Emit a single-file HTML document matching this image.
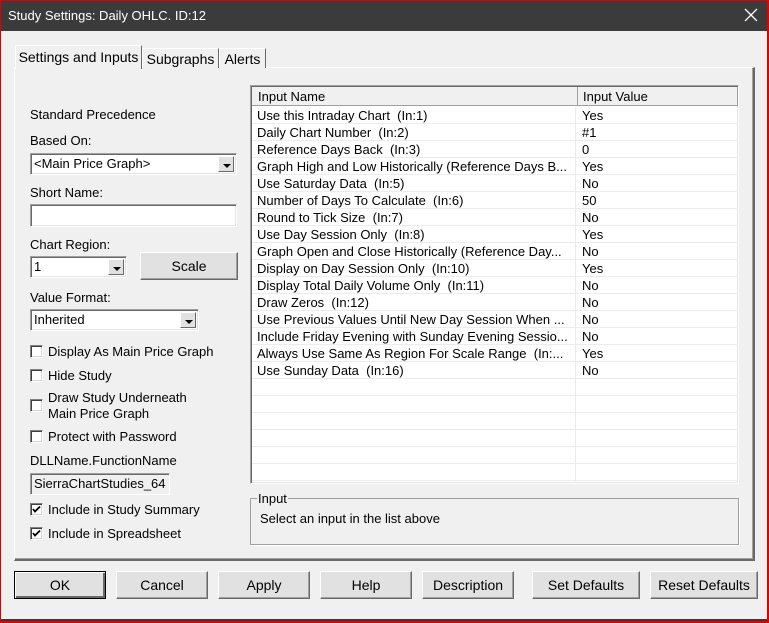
<!DOCTYPE html>
<html><head><meta charset="utf-8"><style>
*{box-sizing:border-box;margin:0;padding:0}
body{width:769px;height:623px;overflow:hidden;background:#f0f0f0;font-family:"Liberation Sans",sans-serif;font-size:13px;color:#000;position:relative}
.a{position:absolute;white-space:nowrap}
.title{left:0;top:0;width:769px;height:31px;background:#3b3b3b;color:#fff;font-size:13px;line-height:31px;padding-left:8px}
.frame{left:0;top:0;width:769px;height:623px;border:1px solid #e00000;border-right-width:2px;border-bottom-width:2px;pointer-events:none}
.sunk{background:#fff;border:1px solid #a0a0a0;border-right-color:#fff;border-bottom-color:#fff;box-shadow:inset 1px 1px 0 #696969,inset -1px -1px 0 #e3e3e3}
.btn{background:#e1e1e1;border:1px solid #fff;border-right-color:#696969;border-bottom-color:#696969;box-shadow:inset -1px -1px 0 #a0a0a0;text-align:center}
.arrow{position:absolute;right:2px;top:2px;bottom:2px;width:16px;background:#e1e1e1;border:1px solid #fff;border-right-color:#696969;border-bottom-color:#696969}
.arrow:after{content:"";position:absolute;left:4px;top:7px;border-left:4px solid transparent;border-right:4px solid transparent;border-top:4px solid #000}
.cb{width:13px;height:13px;background:#fff;border:1px solid #808080;border-right-color:#fff;border-bottom-color:#fff;box-shadow:inset 1px 1px 0 #404040,inset -1px -1px 0 #d4d4d4}
.tab{border:1px solid #fff;border-right-color:#696969;border-bottom:none;background:#f0f0f0;text-align:center}
.row{position:absolute;left:1px;width:486px;height:17px;border-bottom:1px solid #ececec;line-height:18px}
.row span{position:absolute;left:5px}
.row b{font-weight:normal;position:absolute;left:330px}
</style></head><body>
<div class="a title">Study Settings: Daily OHLC. ID:12</div>
<svg class="a" style="left:744px;top:8px" width="14" height="14" viewBox="0 0 14 14"><path d="M1 1L13 13M13 1L1 13" stroke="#fff" stroke-width="1.3" fill="none"/></svg>

<div class="a" style="left:14px;top:67px;width:741px;height:494px;border:1px solid #fff;border-right:2px solid #696969;border-bottom:2px solid #696969;box-shadow:inset -1px -1px 0 #a0a0a0"></div>
<div class="a tab" style="left:142px;top:48px;width:77px;height:20px;line-height:20px;font-size:14px">Subgraphs</div>
<div class="a tab" style="left:219px;top:48px;width:47px;height:20px;line-height:20px;font-size:14px">Alerts</div>
<div class="a tab" style="left:15px;top:45px;width:127px;height:24px;line-height:22px;font-size:14px;border-right-color:#696969">Settings and Inputs</div>

<div class="a" style="left:30px;top:107px">Standard Precedence</div>
<div class="a" style="left:30px;top:133px">Based On:</div>
<div class="a sunk" style="left:30px;top:153px;width:207px;height:22px;line-height:19px;padding-left:3px">&lt;Main Price Graph&gt;<div class="arrow"></div></div>
<div class="a" style="left:30px;top:185px">Short Name:</div>
<div class="a sunk" style="left:30px;top:204px;width:207px;height:23px"></div>
<div class="a" style="left:30px;top:237px">Chart Region:</div>
<div class="a sunk" style="left:30px;top:256px;width:97px;height:22px;line-height:19px;padding-left:3px">1<div class="arrow"></div></div>
<div class="a btn" style="left:140px;top:252px;width:98px;height:28px;line-height:26px;font-size:14px">Scale</div>
<div class="a" style="left:30px;top:290px">Value Format:</div>
<div class="a sunk" style="left:30px;top:309px;width:169px;height:22px;line-height:19px;padding-left:3px">Inherited<div class="arrow"></div></div>

<div class="a cb" style="left:30px;top:345px"></div><div class="a" style="left:48px;top:344px">Display As Main Price Graph</div>
<div class="a cb" style="left:30px;top:369px"></div><div class="a" style="left:48px;top:368px">Hide Study</div>
<div class="a cb" style="left:30px;top:399px"></div><div class="a" style="left:48px;top:390px;line-height:16px">Draw Study Underneath<br>Main Price Graph</div>
<div class="a cb" style="left:30px;top:430px"></div><div class="a" style="left:48px;top:429px">Protect with Password</div>
<div class="a" style="left:30px;top:453px">DLLName.FunctionName</div>
<div class="a" style="left:30px;top:473px;width:140px;height:22px;border:1px solid #a0a0a0;border-right-color:#fff;border-bottom-color:#fff;box-shadow:inset 1px 1px 0 #696969;line-height:19px;padding-left:3px;background:#f0f0f0">SierraChartStudies_64</div>
<div class="a cb" style="left:30px;top:503px"><svg width="11" height="11" style="position:absolute;left:0;top:0"><path d="M2 5L4 7.5L9 2.5" stroke="#000" stroke-width="1.8" fill="none"/></svg></div><div class="a" style="left:48px;top:502px">Include in Study Summary</div>
<div class="a cb" style="left:30px;top:527px"><svg width="11" height="11" style="position:absolute;left:0;top:0"><path d="M2 5L4 7.5L9 2.5" stroke="#000" stroke-width="1.8" fill="none"/></svg></div><div class="a" style="left:48px;top:526px">Include in Spreadsheet</div>

<div class="a sunk" style="left:250px;top:85px;width:489px;height:399px;overflow:hidden">
<div class="a" style="left:1px;top:1px;width:326px;height:19px;background:#f0f0f0;border-right:1px solid #a0a0a0;border-bottom:1px solid #a0a0a0;padding-left:6px;line-height:19px">Input Name</div>
<div class="a" style="left:327px;top:1px;width:160px;height:19px;background:#f0f0f0;border-right:1px solid #a0a0a0;border-bottom:1px solid #a0a0a0;padding-left:5px;line-height:19px">Input Value</div>
<div class="a" style="left:324px;top:21px;width:1px;height:376px;background:#ececec"></div>
<div class="a" style="left:0;top:21px;width:487px">
<div class="row" style="top:0"><span>Use this Intraday Chart &nbsp;(In:1)</span><b>Yes</b></div>
<div class="row" style="top:17px"><span>Daily Chart Number &nbsp;(In:2)</span><b>#1</b></div>
<div class="row" style="top:34px"><span>Reference Days Back &nbsp;(In:3)</span><b>0</b></div>
<div class="row" style="top:51px"><span>Graph High and Low Historically (Reference Days B...</span><b>Yes</b></div>
<div class="row" style="top:68px"><span>Use Saturday Data &nbsp;(In:5)</span><b>No</b></div>
<div class="row" style="top:85px"><span>Number of Days To Calculate &nbsp;(In:6)</span><b>50</b></div>
<div class="row" style="top:102px"><span>Round to Tick Size &nbsp;(In:7)</span><b>No</b></div>
<div class="row" style="top:119px"><span>Use Day Session Only &nbsp;(In:8)</span><b>Yes</b></div>
<div class="row" style="top:136px"><span>Graph Open and Close Historically (Reference Day...</span><b>No</b></div>
<div class="row" style="top:153px"><span>Display on Day Session Only &nbsp;(In:10)</span><b>Yes</b></div>
<div class="row" style="top:170px"><span>Display Total Daily Volume Only &nbsp;(In:11)</span><b>No</b></div>
<div class="row" style="top:187px"><span>Draw Zeros &nbsp;(In:12)</span><b>No</b></div>
<div class="row" style="top:204px"><span>Use Previous Values Until New Day Session When ...</span><b>No</b></div>
<div class="row" style="top:221px"><span>Include Friday Evening with Sunday Evening Sessio...</span><b>No</b></div>
<div class="row" style="top:238px"><span>Always Use Same As Region For Scale Range &nbsp;(In:...</span><b>Yes</b></div>
<div class="row" style="top:255px"><span>Use Sunday Data &nbsp;(In:16)</span><b>No</b></div>
<div class="row" style="top:272px"></div><div class="row" style="top:289px"></div><div class="row" style="top:306px"></div><div class="row" style="top:323px"></div><div class="row" style="top:340px"></div><div class="row" style="top:357px"></div>
</div>
</div>

<div class="a" style="left:250px;top:498px;width:489px;height:47px;border:1px solid #a0a0a0;box-shadow:1px 1px 0 #fff"></div>
<div class="a" style="left:257px;top:491px;background:#f0f0f0;padding:0 1px">Input</div>
<div class="a" style="left:260px;top:511px">Select an input in the list above</div>

<div class="a btn" style="left:14px;top:571px;width:92px;height:28px;line-height:26px;font-size:14px;border:1px solid #000;box-shadow:inset 1px 1px 0 #fff,inset -2px -2px 0 #696969">OK</div>
<div class="a btn" style="left:116px;top:571px;width:92px;height:28px;line-height:26px;font-size:14px">Cancel</div>
<div class="a btn" style="left:218px;top:571px;width:92px;height:28px;line-height:26px;font-size:14px">Apply</div>
<div class="a btn" style="left:320px;top:571px;width:92px;height:28px;line-height:26px;font-size:14px">Help</div>
<div class="a btn" style="left:422px;top:571px;width:92px;height:28px;line-height:26px;font-size:14px">Description</div>
<div class="a btn" style="left:532px;top:571px;width:108px;height:28px;line-height:26px;font-size:14px">Set Defaults</div>
<div class="a btn" style="left:650px;top:571px;width:108px;height:28px;line-height:26px;font-size:14px">Reset Defaults</div>

<div class="a" style="left:1px;top:619px;width:766px;height:2px;background:#3b3b3b"></div>
<div class="a frame"></div>
</body></html>
